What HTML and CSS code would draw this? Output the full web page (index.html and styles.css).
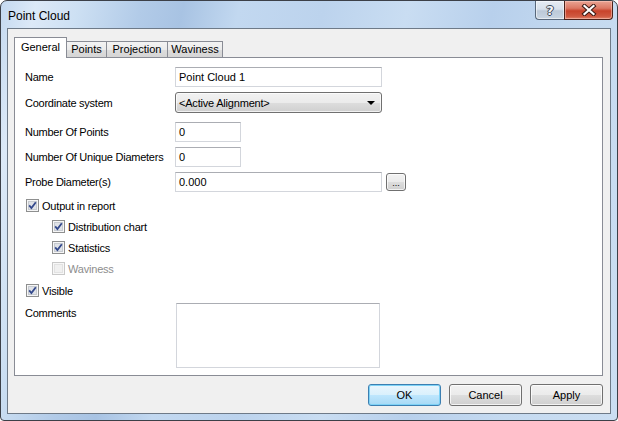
FILE: index.html
```html
<!DOCTYPE html>
<html>
<head>
<meta charset="utf-8">
<title>Point Cloud</title>
<link rel="stylesheet" href="styles.css">
</head>
<body>
<div class="window">
  <div class="titlebar">
    <span class="title">Point Cloud</span>
    <div class="caption-btns">
      <div class="cap help"><span class="q">?</span></div>
      <div class="cap close">
        <svg width="16" height="12" viewBox="0 0 16 12"><path d="M3.5 2 L12.5 10 M12.5 2 L3.5 10" stroke="#3b1a14" stroke-width="4.2" stroke-linecap="square" fill="none"/><path d="M3.5 2 L12.5 10 M12.5 2 L3.5 10" stroke="#ffffff" stroke-width="2.2" stroke-linecap="square" fill="none"/></svg>
      </div>
    </div>
  </div>
  <div class="client">
    <div class="tabs">
      <div class="tab active">General</div>
      <div class="tab t-points">Points</div>
      <div class="tab t-proj">Projection</div>
      <div class="tab t-wav">Waviness</div>
    </div>
    <div class="panel">
      <div class="row r1"><span class="lbl">Name</span><div class="textbox w-wide">Point Cloud 1</div></div>
      <div class="row r2"><span class="lbl">Coordinate system</span><div class="combo"><span>&lt;Active Alignment&gt;</span><svg width="8" height="4" viewBox="0 0 8 4"><polygon points="0,0 8,0 4,4" fill="#000"/></svg></div></div>
      <div class="row r3"><span class="lbl">Number Of Points</span><div class="textbox w-short">0</div></div>
      <div class="row r4"><span class="lbl">Number Of Unique Diameters</span><div class="textbox w-short">0</div></div>
      <div class="row r5"><span class="lbl">Probe Diameter(s)</span><div class="textbox w-wide">0.000</div><div class="dots">...</div></div>
      <div class="cbrow c1">
        <svg class="cb" width="13" height="13" viewBox="0 0 13 13"><rect x="0.5" y="0.5" width="12" height="12" fill="#f6f6f6" stroke="#8e8f8f"/><rect x="2.5" y="2.5" width="8" height="8" fill="#dfe2e7" stroke="#c6cad0"/><path d="M3.2 6.4 L5.4 9 L9.8 3.2" stroke="#34498c" stroke-width="1.8" fill="none"/></svg>
        <span>Output in report</span>
      </div>
      <div class="cbrow sub c2">
        <svg class="cb" width="13" height="13" viewBox="0 0 13 13"><rect x="0.5" y="0.5" width="12" height="12" fill="#f6f6f6" stroke="#8e8f8f"/><rect x="2.5" y="2.5" width="8" height="8" fill="#dfe2e7" stroke="#c6cad0"/><path d="M3.2 6.4 L5.4 9 L9.8 3.2" stroke="#34498c" stroke-width="1.8" fill="none"/></svg>
        <span>Distribution chart</span>
      </div>
      <div class="cbrow sub c3">
        <svg class="cb" width="13" height="13" viewBox="0 0 13 13"><rect x="0.5" y="0.5" width="12" height="12" fill="#f6f6f6" stroke="#8e8f8f"/><rect x="2.5" y="2.5" width="8" height="8" fill="#dfe2e7" stroke="#c6cad0"/><path d="M3.2 6.4 L5.4 9 L9.8 3.2" stroke="#34498c" stroke-width="1.8" fill="none"/></svg>
        <span>Statistics</span>
      </div>
      <div class="cbrow sub c4 disabled">
        <svg class="cb" width="13" height="13" viewBox="0 0 13 13"><rect x="0.5" y="0.5" width="12" height="12" fill="#f7f7f7" stroke="#c9c9c9"/><rect x="2.5" y="2.5" width="8" height="8" fill="#f0f0f0" stroke="#e2e2e2"/></svg>
        <span>Waviness</span>
      </div>
      <div class="cbrow c5">
        <svg class="cb" width="13" height="13" viewBox="0 0 13 13"><rect x="0.5" y="0.5" width="12" height="12" fill="#f6f6f6" stroke="#8e8f8f"/><rect x="2.5" y="2.5" width="8" height="8" fill="#dfe2e7" stroke="#c6cad0"/><path d="M3.2 6.4 L5.4 9 L9.8 3.2" stroke="#34498c" stroke-width="1.8" fill="none"/></svg>
        <span>Visible</span>
      </div>
      <div class="row r-comments"><span class="lbl">Comments</span><div class="textarea"></div></div>
    </div>
    <div class="buttons">
      <div class="btn default">OK</div>
      <div class="btn">Cancel</div>
      <div class="btn">Apply</div>
    </div>
  </div>
</div>
</body>
</html>
```

FILE: styles.css
```css
html, body {
  margin: 0;
  padding: 0;
  background: #ffffff;
}

body {
  font-family: "Liberation Sans", Arial, sans-serif;
  font-size: 11px;
  color: #000;
}

.window {
  box-sizing: border-box;
  width: 618px;
  height: 421px;
  border: 1px solid #3c4048;
  border-radius: 7px 7px 4px 4px;
  background: linear-gradient(102deg, #c4d9f0 0%, #dce9f7 5%, #cde0f3 11%, #b2cbe8 20%, #a8c3e3 26%, #c2d8f0 34%, #bcd3ed 46%, #c9ddf2 58%, #b8d0ec 70%, #c5daf0 84%, #cbdef2 100%);
  padding: 0 6px 6px 6px;
  display: flex;
  flex-direction: column;
  overflow: hidden;
}

.titlebar {
  height: 27px;
  display: flex;
  align-items: flex-start;
  justify-content: space-between;
  margin-right: -2px;
}

.title {
  font-size: 12px;
  padding-left: 1px;
  padding-top: 8px;
  color: #000;
}

.caption-btns {
  display: flex;
}

.cap {
  box-sizing: border-box;
  height: 19px;
  display: flex;
  align-items: center;
  justify-content: center;
  border: 1px solid #58687b;
  border-top: none;
}

.help {
  width: 29px;
  border-radius: 0 0 0 4px;
  border-right: none;
  background: linear-gradient(to bottom, #e6ecf3 0%, #d8e1eb 45%, #bcc9d8 55%, #c9d5e2 100%);
  box-shadow: inset 0 0 0 1px rgba(255,255,255,0.55);
}

.help .q {
  font-family: "DejaVu Sans", sans-serif;
  font-weight: bold;
  font-size: 13px;
  color: #f4f6f8;
  text-shadow: 1px 0 0 #3e4a58, -1px 0 0 #3e4a58, 0 1px 0 #3e4a58, 0 -1px 0 #3e4a58;
  line-height: 1;
}

.close {
  width: 49px;
  border-radius: 0 0 4px 0;
  border-color: #4b221b;
  background: linear-gradient(to bottom, #eaa493 0%, #dc7864 40%, #c8432b 55%, #cf5840 85%, #e0846a 100%);
  box-shadow: inset 0 0 0 1px rgba(255,210,200,0.5);
}

.client {
  box-sizing: border-box;
  flex: 1;
  border: 1px solid #6e7a88;
  background: #f0f0f0;
  padding: 8px 7px 0 6px;
  display: flex;
  flex-direction: column;
}

.tabs {
  display: flex;
  align-items: flex-end;
  height: 20px;
}

.tab {
  box-sizing: border-box;
  height: 16px;
  border: 1px solid #898c95;
  border-bottom: none;
  border-left: none;
  background: linear-gradient(to bottom, #f3f3f3 0%, #ebebeb 50%, #dddddd 51%, #d5d5d5 100%);
  text-align: center;
  line-height: 15px;
}

.tab.active {
  height: 21px;
  width: 53px;
  border-left: 1px solid #898c95;
  background: #ffffff;
  margin-bottom: -1px;
  position: relative;
  z-index: 1;
  line-height: 19px;
}

.t-points { width: 40px; }
.t-proj { width: 61px; }
.t-wav { width: 55px; }

.panel {
  box-sizing: border-box;
  height: 319px;
  border: 1px solid #898c95;
  background: #ffffff;
  padding: 0 10px;
}

.row {
  display: flex;
  align-items: center;
}

.lbl {
  width: 150px;
  flex: none;
  letter-spacing: -0.25px;
}

.textbox {
  box-sizing: border-box;
  height: 20px;
  border: 1px solid #d3d6dc;
  border-top-color: #abadb3;
  background: #fff;
  padding-left: 3px;
  line-height: 18px;
}

.w-wide { width: 207px; }
.w-short { width: 66px; }

.r1 { margin-top: 9px; }
.r2 { margin-top: 5px; }
.r3 { margin-top: 9px; }
.r4 { margin-top: 5px; }
.r5 { margin-top: 5px; }

.combo {
  box-sizing: border-box;
  width: 207px;
  height: 21px;
  border: 1px solid #707070;
  border-radius: 3px;
  background: linear-gradient(to bottom, #f2f2f2 0%, #ebebeb 50%, #dddddd 51%, #cfcfcf 100%);
  box-shadow: inset 0 0 0 1px rgba(255,255,255,0.7);
  display: flex;
  align-items: center;
  justify-content: space-between;
  padding: 0 6px 0 3px;
  letter-spacing: -0.2px;
}

.dots {
  box-sizing: border-box;
  width: 20px;
  height: 18px;
  margin-left: 4px;
  border: 1px solid #707070;
  border-radius: 3px;
  background: linear-gradient(to bottom, #f2f2f2 0%, #ebebeb 50%, #dddddd 51%, #cfcfcf 100%);
  box-shadow: inset 0 0 0 1px rgba(255,255,255,0.7);
  text-align: center;
  font-size: 9px;
  line-height: 18px;
}

.cbrow {
  display: flex;
  align-items: center;
  height: 13px;
  margin-left: 1px;
  letter-spacing: -0.2px;
}

.cbrow .cb {
  flex: none;
  margin-right: 3px;
}

.cbrow.sub { margin-left: 27px; }
.cbrow.disabled span { color: #8d8d8d; }

.c1 { margin-top: 7px; }
.c2 { margin-top: 8px; }
.c3 { margin-top: 8px; }
.c4 { margin-top: 8px; }
.c5 { margin-top: 9px; }

.r-comments {
  margin-top: 6px;
  align-items: flex-start;
}

.r-comments .lbl { margin-top: 4px; }

.textarea {
  box-sizing: border-box;
  width: 204px;
  height: 65px;
  margin-left: 1px;
  border: 1px solid #d3d6dc;
  border-top-color: #abadb3;
  background: #fff;
}

.buttons {
  display: flex;
  justify-content: flex-end;
  gap: 8px;
  margin-top: 8px;
}

.btn {
  box-sizing: border-box;
  width: 73px;
  height: 22px;
  border: 1px solid #707070;
  border-radius: 3px;
  background: linear-gradient(to bottom, #f2f2f2 0%, #ebebeb 50%, #dddddd 51%, #cfcfcf 100%);
  box-shadow: inset 0 0 0 1px rgba(255,255,255,0.75);
  text-align: center;
  line-height: 20px;
}

.btn.default {
  border-color: #3c7fb1;
  background: linear-gradient(to bottom, #eaf6fd 0%, #d9f0fc 50%, #bee6fd 51%, #a7d9f5 100%);
  box-shadow: inset 0 0 0 1px #7ed2f6;
}
```
